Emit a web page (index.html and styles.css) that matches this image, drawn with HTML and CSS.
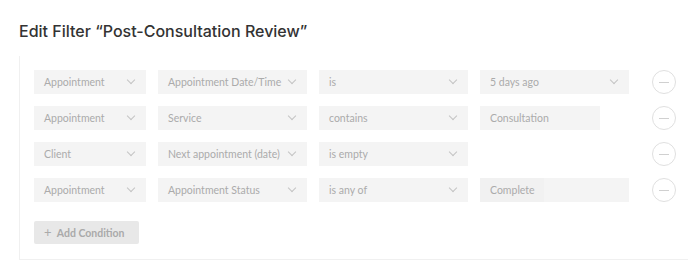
FILE: index.html
```html
<!DOCTYPE html>
<html lang="en">
<head>
    <meta charset="UTF-8">
    <title>Edit Filter</title>
    <link rel="stylesheet" href="styles.css">
</head>
<body>

    <h1 class="title">Edit Filter “Post-Consultation Review”</h1>

    <div class="panel">
        <div class="conditions">
            <div class="select">Appointment <span class="chev"></span></div>
            <div class="select">Appointment Date/Time <span class="chev"></span></div>
            <div class="select">is <span class="chev"></span></div>
            <div class="select">5 days ago <span class="chev"></span></div>
            <button class="remove"><span></span></button>

            <div class="select">Appointment <span class="chev"></span></div>
            <div class="select">Service <span class="chev"></span></div>
            <div class="select">contains <span class="chev"></span></div>
            <div class="field short">Consultation</div>
            <button class="remove"><span></span></button>

            <div class="select">Client <span class="chev"></span></div>
            <div class="select">Next appointment (date) <span class="chev"></span></div>
            <div class="select">is empty <span class="chev"></span></div>
            <div></div>
            <button class="remove"><span></span></button>

            <div class="select">Appointment <span class="chev"></span></div>
            <div class="select">Appointment Status <span class="chev"></span></div>
            <div class="select">is any of <span class="chev"></span></div>
            <div class="field"><span class="chip">Complete</span></div>
            <button class="remove"><span></span></button>
        </div>

        <button class="add"><span class="plus">+</span> Add Condition</button>
    </div>

</body>
</html>
```

FILE: styles.css
```css
body {
    margin: 0;
    background-color: #fff;
    font-family: Lato, "Open Sans", sans-serif;
}
.title {
    margin: 0;
    padding: 21px 0 0 19px;
    font-family: Inter, sans-serif;
    font-size: 16px;
    font-weight: 500;
    line-height: 20px;
    color: #333;
}
.panel {
    margin: 15px 0 0 19px;
    padding: 14px 0 15px 14px;
    border-left: 1px solid #f0f0f0;
    border-bottom: 1px solid #f0f0f0;
}
.conditions {
    display: grid;
    grid-template-columns: 112px 149px 149px 149px 24px;
    column-gap: 12px;
    row-gap: 12px;
    align-items: center;
}
.select, .field {
    height: 24px;
    box-sizing: border-box;
    padding: 0 10px 1px 10px;
    background-color: #f4f4f4;
    color: #ababab;
    font-size: 10.5px;
    display: flex;
    align-items: center;
    justify-content: space-between;
    white-space: nowrap;
    overflow: hidden;
}
.field {
    padding: 0;
}
.field.short {
    width: 120px;
    padding: 0 10px 1px 10px;
}
.chip {
    display: flex;
    align-items: center;
    height: 100%;
    padding: 0 10px 1px 10px;
    width: 64px;
    box-sizing: border-box;
    background-color: #f1f1f1;
}
.chev {
    width: 5px;
    height: 5px;
    border-right: 1px solid #c4c4c4;
    border-bottom: 1px solid #c4c4c4;
    transform: rotate(45deg);
    margin: -3px 2px 0 0;
    flex-shrink: 0;
}
.remove {
    margin-left: 11px;
    width: 24px;
    height: 24px;
    border: 1px solid #e0e0e0;
    border-radius: 50%;
    background-color: #fff;
    padding: 0;
    display: flex;
    align-items: center;
    justify-content: center;
}
.remove span {
    width: 10px;
    height: 1px;
    background-color: #d0d0d0;
}
.add {
    margin-top: 19px;
    width: 105px;
    height: 23px;
    border: none;
    border-radius: 2px;
    background-color: #e8e8e8;
    color: #aaa;
    font-family: Lato, sans-serif;
    font-size: 10.5px;
    font-weight: bold;
    text-align: left;
    padding: 0 0 1px 10px;
}
.plus {
    font-weight: normal;
    font-size: 13px;
    margin-right: 3px;
}
```
